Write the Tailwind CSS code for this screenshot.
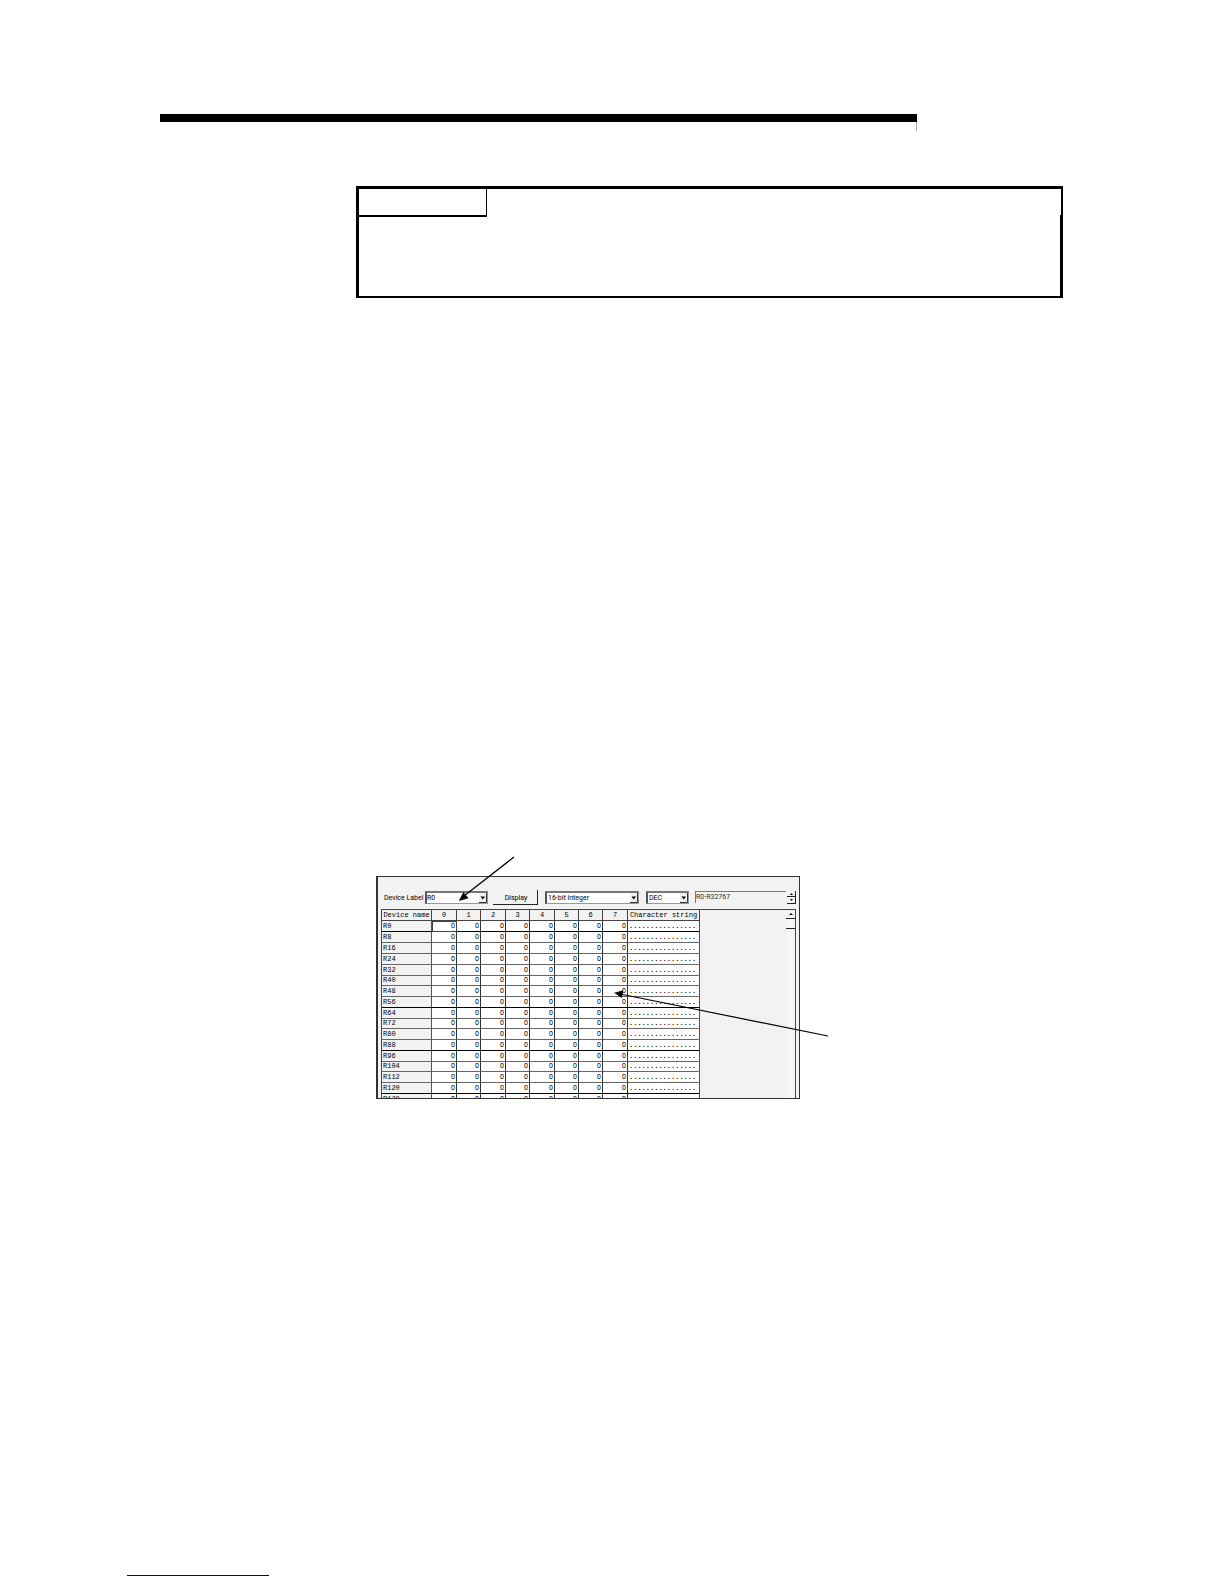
<!DOCTYPE html>
<html lang="en">
<head>
  <meta charset="UTF-8">
  <meta name="viewport" content="width=device-width, initial-scale=1.0">
  <title>Device Monitor</title>
  <script src="https://cdn.jsdelivr.net/npm/@tailwindcss/browser@4"></script>
</head>
<body class="bg-white text-black font-['Roboto',sans-serif] min-h-screen flex flex-col pt-[114px] pb-2">

  <!-- heading rule -->
  <header class="ml-40 mr-[307px] border-r border-[#aaa] h-[17px]">
    <div class="bg-black h-2 -mr-px"></div>
  </header>

  <!-- point box -->
  <section class="ml-[356px] mr-[161px] mt-[55px] border-black border-t-3 border-l-3 border-b-2">
    <div class="h-[26px] border-r-2 border-black">
      <div class="w-32 h-7 border-r border-b-2 border-black"></div>
    </div>
    <div class="h-[81px] border-r-3 border-black"></div>
  </section>

  <main class="relative ml-[376px] mr-[424px] mt-[578px]">
    <div class="h-[223px] overflow-hidden bg-[#f2f2f2] border-t border-r border-b border-l-2 border-[#333] flex flex-col">

      <form class="h-8 shrink-0 pt-[13px] pl-1.5 pr-[3px] flex items-start text-[7px] leading-[12px]">
        <label for="device" class="w-[41px] mt-0.5 whitespace-nowrap">Device Label</label>
        <div class="relative w-[63px] h-[13px] mt-px">
          <select id="device" class="appearance-none block w-full h-full bg-white border-t-2 border-l-2 border-r border-b border-t-[#777] border-l-[#555] border-[#999] leading-[10px]">
            <option>R0</option>
          </select>
          <svg class="absolute right-px top-0.5 w-2 h-2.5 pointer-events-none" viewBox="0 0 8 10"><path d="M0 0h8v10H0z" fill="#eee"/><path d="M0 9.500h7.500V0" fill="none" stroke="#333"/><path d="M1.500 3.500h4.500L3.750 6.500z" fill="#000"/></svg>
        </div>
        <button type="button" class="ml-[5px] w-[45px] h-[15px] pt-0.5 pl-0.5 bg-[#f2f2f2] border-r border-b border-[#222]">Display</button>
        <div class="relative ml-[7px] w-[94px] h-[13px] mt-px">
          <select aria-label="Data format" class="appearance-none block w-full h-full bg-white border-t-2 border-l-2 border-r border-b border-t-[#777] border-l-[#555] border-[#999] pl-px leading-[10px]">
            <option>16-bit integer</option>
          </select>
          <svg class="absolute right-px top-0.5 w-2 h-2.5 pointer-events-none" viewBox="0 0 8 10"><path d="M0 0h8v10H0z" fill="#eee"/><path d="M0 9.500h7.500V0" fill="none" stroke="#333"/><path d="M1.500 3.500h4.500L3.750 6.500z" fill="#000"/></svg>
        </div>
        <div class="relative ml-[7px] w-[43px] h-[13px] mt-px">
          <select aria-label="Number base" class="appearance-none block w-full h-full bg-white border-t-2 border-l-2 border-r border-b border-t-[#777] border-l-[#555] border-[#999] pl-px leading-[10px]">
            <option>DEC</option>
          </select>
          <svg class="absolute right-px top-0.5 w-2 h-2.5 pointer-events-none" viewBox="0 0 8 10"><path d="M0 0h8v10H0z" fill="#eee"/><path d="M0 9.500h7.500V0" fill="none" stroke="#333"/><path d="M1.500 3.500h4.500L3.750 6.500z" fill="#000"/></svg>
        </div>
        <input type="text" aria-label="Device range" value="R0-R32767" readonly class="ml-1.5 mr-px flex-1 min-w-0 h-3 mt-px pb-0.5 border-t border-l border-[#777] text-[#333] leading-[9px]">
        <div class="w-[9px] mt-px flex flex-col">
          <button type="button" aria-label="Up" class="h-1.5 border-r border-b border-[#222] flex items-center justify-center"><svg class="w-[3px] h-0.5" viewBox="0 0 3 2"><path d="M0 2h3L1.500 0z"/></svg></button>
          <button type="button" aria-label="Down" class="h-[7px] border-r border-b border-[#222] flex items-center justify-center"><svg class="w-[3px] h-0.5" viewBox="0 0 3 2"><path d="M0 0h3L1.500 2z"/></svg></button>
        </div>
      </form>

      <div class="flex-1 min-h-0 ml-[3px] mr-[3px] flex items-start border-t border-r border-l border-[#444]">
        <table class="table-fixed w-[318px] shrink-0 border-separate border-spacing-0 font-['Liberation_Mono',monospace] text-[7px] leading-[9px]">
          <colgroup>
            <col class="w-[50px]"><col class="w-[25px]"><col class="w-[24px]"><col class="w-[25px]"><col class="w-[24px]">
            <col class="w-[25px]"><col class="w-[24px]"><col class="w-[24px]"><col class="w-[25px]"><col class="w-[72px]">
          </colgroup>
          <thead>
            <tr id="head" class="h-[11px]"></tr>
          </thead>
          <tbody id="rows"></tbody>
        </table>
        <div class="flex-1"></div>
        <!-- scroll bar -->
        <div class="w-[9px] self-stretch bg-[#f5f5f5]">
          <button type="button" aria-label="Scroll up" class="w-full h-[9px] border-b border-[#222] flex items-center justify-center"><svg class="w-1 h-0.5" viewBox="0 0 4 2"><path d="M0 2h4L2 0z"/></svg></button>
          <div class="h-2.5 border-b border-[#222]"></div>
        </div>
      </div>
    </div>

    <!-- callout arrows -->
    <svg class="absolute left-0 top-0 w-full h-full overflow-visible pointer-events-none" fill="none" stroke="#000" stroke-width="1.200">
      <path d="M138 -19L88 20"/>
      <path d="M84 24L87.500 17L91.500 22z" fill="#000"/>
      <path d="M452 160L244 118"/>
      <path d="M239.500 117L246.500 115L245.500 121z" fill="#000"/>
    </svg>
  </main>

  <footer class="mt-auto ml-[127px]">
    <a href="#" aria-label="Manual link" class="block w-[142px] h-4 border-b border-[#000080]"></a>
  </footer>

  <script>
    const titles = ['Device name', '0', '1', '2', '3', '4', '5', '6', '7', 'Character string'];
    const thick = [0, 56, 88, 120];

    document.getElementById('head').innerHTML = titles.map(t =>
      `<th scope="col" class="p-0 pt-px font-normal text-center whitespace-nowrap border-r border-b border-[#444]">${t}</th>`
    ).join('');

    let html = '';
    for (let i = 0; i < 17; i++) {
      const device = i * 8;
      const line = thick.includes(device) ? 'border-b border-b-black' : 'border-b border-b-[#666]';
      html += `<tr class="${i > 1 && i % 4 === 1 ? 'h-[10px]' : 'h-[11px]'}">`;
      html += `<th scope="row" class="p-0 pl-px font-normal text-left border-r border-r-[#555] ${line}">R${device}</th>`;
      for (let c = 0; c < 8; c++) {
        const selected = i === 0 && c === 0 ? 'outline outline-[#444] -outline-offset-1' : '';
        html += `<td class="p-0 pr-px text-right bg-white font-['Roboto',sans-serif] border-r border-r-[#333] ${line} ${selected}">0</td>`;
      }
      html += `<td class="p-0 pl-px text-left font-bold bg-white border-r border-r-[#555] ${line}">................</td></tr>`;
    }
    document.getElementById('rows').innerHTML = html;
  </script>
</body>
</html>
